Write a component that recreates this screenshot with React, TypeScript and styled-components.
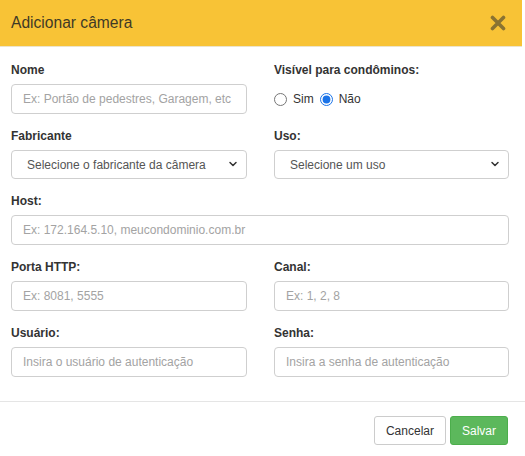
import React, { useState } from "react";
import styled, { createGlobalStyle } from "styled-components";
import { ChevronDown } from "lucide-react";

const GlobalStyle = createGlobalStyle`
  html, body { margin: 0; padding: 0; background: #fff; }
  body { font-family: "Liberation Sans", Arial, sans-serif; color: #333; }
  * { box-sizing: border-box; }
`;

const Modal = styled.div`
  width: 525px;
  height: 456px;
  background: #fff;
  display: flex;
  flex-direction: column;
`;

const Header = styled.div`
  height: 48px;
  background: #f8c336;
  border-bottom: 1px solid #ece4cc;
  display: flex;
  align-items: center;
  justify-content: space-between;
  padding: 0 16px 0 11px;
  width: 522px;
`;

const Title = styled.h4`
  margin: 0;
  font-size: 15.6px;
  font-weight: normal;
  color: #3f3a26;
  padding-bottom: 1px;
`;

const CloseButton = styled.button`
  background: none;
  border: none;
  padding: 0;
  cursor: pointer;
  display: flex;
  margin-top: -1px;
`;

const Body = styled.div`
  padding: 15px 16px 24px 11px;
  display: grid;
  grid-template-columns: 236px 235px;
  column-gap: 27px;
  row-gap: 14px;
`;

const Group = styled.div<{ $span?: boolean }>`
  display: flex;
  flex-direction: column;
  grid-column: ${(p) => (p.$span ? "1 / -1" : "auto")};
`;

const Label = styled.label`
  font-size: 12px;
  font-weight: bold;
  line-height: 17px;
  margin-bottom: 5px;
  color: #333;
`;

const Input = styled.input`
  height: 30px;
  width: 100%;
  border: 1px solid #cfcfcf;
  border-radius: 4px;
  padding: 0 11px;
  font-family: inherit;
  font-size: 12px;
  color: #555;
  outline: none;
  &::placeholder { color: #a3a3a3; }
`;

const SelectWrap = styled.div`
  position: relative;
  height: 29px;
`;

const Select = styled.select`
  appearance: none;
  height: 29px;
  width: 100%;
  border: 1px solid #cfcfcf;
  border-radius: 4px;
  padding: 0 24px 0 15px;
  font-family: inherit;
  font-size: 12px;
  color: #555;
  background: #fff;
  outline: none;
`;

const Chevron = styled.span`
  position: absolute;
  right: 8px;
  top: 8px;
  display: flex;
  pointer-events: none;
  color: #333;
`;

const RadioRow = styled.div`
  display: flex;
  align-items: center;
  height: 16px;
  margin-top: 7px;
  font-size: 12px;
`;

const RadioLabel = styled.label`
  display: flex;
  align-items: center;
  margin-right: 6px;
  color: #333;
  input {
    width: 13px;
    height: 13px;
    margin: 0 6px 0 0;
    accent-color: #1a73e8;
  }
`;

const Footer = styled.div`
  border-top: 1px solid #e5e5e5;
  padding: 14px 17px 11px 11px;
  display: flex;
  justify-content: flex-end;
  gap: 4px;
`;

const Button = styled.button<{ $primary?: boolean }>`
  height: 29px;
  padding: 0 11px;
  border-radius: 3px;
  font-family: inherit;
  font-size: 12px;
  cursor: pointer;
  border: 1px solid ${(p) => (p.$primary ? "#4cae4c" : "#ccc")};
  background: ${(p) => (p.$primary ? "#5cb85c" : "#fff")};
  color: ${(p) => (p.$primary ? "#fff" : "#333")};
`;

export default function App() {
  const [visible, setVisible] = useState("nao");

  return (
    <Modal>
      <GlobalStyle />
      <Header>
        <Title>Adicionar câmera</Title>
        <CloseButton aria-label="Fechar">
          <svg width="16" height="16" viewBox="0 0 16 16">
            <path d="M2.5 2.5 L13.5 13.5 M13.5 2.5 L2.5 13.5" stroke="#8a7332" strokeWidth="3.6" strokeLinecap="round" />
          </svg>
        </CloseButton>
      </Header>
      <Body>
        <Group>
          <Label>Nome</Label>
          <Input placeholder="Ex: Portão de pedestres, Garagem, etc" />
        </Group>
        <Group>
          <Label>Visível para condôminos:</Label>
          <RadioRow>
            <RadioLabel>
              <input type="radio" name="vis" checked={visible === "sim"} onChange={() => setVisible("sim")} />
              Sim
            </RadioLabel>
            <RadioLabel>
              <input type="radio" name="vis" checked={visible === "nao"} onChange={() => setVisible("nao")} />
              Não
            </RadioLabel>
          </RadioRow>
        </Group>
        <Group>
          <Label>Fabricante</Label>
          <SelectWrap>
            <Select defaultValue="">
              <option value="">Selecione o fabricante da câmera</option>
            </Select>
            <Chevron><ChevronDown size={12} strokeWidth={3} /></Chevron>
          </SelectWrap>
        </Group>
        <Group>
          <Label>Uso:</Label>
          <SelectWrap>
            <Select defaultValue="">
              <option value="">Selecione um uso</option>
            </Select>
            <Chevron><ChevronDown size={12} strokeWidth={3} /></Chevron>
          </SelectWrap>
        </Group>
        <Group $span>
          <Label>Host:</Label>
          <Input placeholder="Ex: 172.164.5.10, meucondominio.com.br" />
        </Group>
        <Group>
          <Label>Porta HTTP:</Label>
          <Input placeholder="Ex: 8081, 5555" />
        </Group>
        <Group>
          <Label>Canal:</Label>
          <Input placeholder="Ex: 1, 2, 8" />
        </Group>
        <Group>
          <Label>Usuário:</Label>
          <Input placeholder="Insira o usuário de autenticação" />
        </Group>
        <Group>
          <Label>Senha:</Label>
          <Input type="password" placeholder="Insira a senha de autenticação" />
        </Group>
      </Body>
      <Footer>
        <Button>Cancelar</Button>
        <Button $primary>Salvar</Button>
      </Footer>
    </Modal>
  );
}
